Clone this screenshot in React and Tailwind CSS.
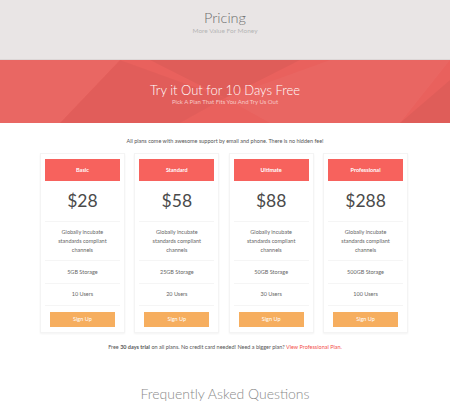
import React from 'react';

const plans = [
  { name: 'Basic', price: '$28', storage: '5GB Storage', users: '10 Users' },
  { name: 'Standard', price: '$58', storage: '25GB Storage', users: '20 Users' },
  { name: 'Ultimate', price: '$88', storage: '50GB Storage', users: '30 Users' },
  { name: 'Professional', price: '$288', storage: '500GB Storage', users: '100 Users' },
];

const BannerPattern = () => (
  <svg className="absolute inset-0 w-full h-full" viewBox="0 0 450 63" preserveAspectRatio="none">
    <polygon points="0,0 120,0 60,63 0,63" fill="#ffffff" opacity="0.04" />
    <polygon points="120,0 225,38 180,63 60,63" fill="#000000" opacity="0.03" />
    <polygon points="225,38 330,0 450,0 400,63 270,63" fill="#ffffff" opacity="0.035" />
    <polygon points="150,0 225,38 300,0" fill="#000000" opacity="0.04" />
    <polygon points="400,63 450,20 450,63" fill="#000000" opacity="0.04" />
  </svg>
);

const PlanCard = ({ plan }) => (
  <div className="flex flex-col bg-white border border-[#f4f4f4] shadow-[0_1px_2px_rgba(0,0,0,0.05)] px-[4px] pt-[5px] pb-[5px]">
    <div className="h-[22px] bg-[#f7625d] flex items-center justify-center text-white text-[5.5px] font-bold">
      {plan.name}
    </div>
    <div className="h-[41px] flex items-center justify-center text-[17.5px] text-[#4a4a4a] border-b border-[#f5f5f5]">
      {plan.price}
    </div>
    <div className="h-[39px] flex items-center justify-center text-center text-[5.5px] leading-[9px] text-[#666] border-b border-[#f5f5f5] px-2">
      Globally incubate<br />standards compliant<br />channels
    </div>
    <div className="h-[23px] flex items-center justify-center text-[5.5px] text-[#666] border-b border-[#f5f5f5]">
      {plan.storage}
    </div>
    <div className="h-[22px] flex items-center justify-center text-[5.5px] text-[#666] border-b border-[#f5f5f5]">
      {plan.users}
    </div>
    <div className="pt-[6px] px-[5px]">
      <div className="h-[15px] bg-[#f6ae5f] flex items-center justify-center text-white text-[5.5px]">
        Sign Up
      </div>
    </div>
  </div>
);

export default function App() {
  return (
    <div className="w-[450px] h-[420px] overflow-hidden bg-white font-['Lato',sans-serif]">
      <header className="h-[60px] bg-[#e9e5e5] border-b border-[#ddd7d7] flex flex-col items-center pt-[9px]">
        <h1 className="text-[14.5px] font-light text-[#6f6f6f] leading-[18px]">Pricing</h1>
        <p className="text-[6.5px] text-[#b5b5b5] leading-[8px]">More Value For Money</p>
      </header>

      <section className="relative h-[63px] bg-[#e9615d] flex flex-col items-center justify-center pt-[4px]">
        <BannerPattern />
        <h2 className="relative text-[13px] font-light text-white leading-[16px]">Try it Out for 10 Days Free</h2>
        <p className="relative text-[6px] text-[#f7c8c6] leading-[8px]">Pick A Plan That Fits You And Try Us Out</p>
      </section>

      <p className="text-center text-[5.5px] text-[#555] pt-[14px] leading-[8px]">
        All plans come with awesome support by email and phone. There is no hidden fee!
      </p>

      <div className="w-[368px] mx-[40px] mt-[8px] grid grid-cols-4 gap-[9.5px]">
        {plans.map((plan, index) => (
          <PlanCard key={index} plan={plan} />
        ))}
      </div>

      <p className="text-center text-[5.5px] text-[#555] pt-[10px] leading-[8px]">
        Free <span className="font-bold">30 days trial</span> on all plans. No credit card needed! Need a bigger plan?{' '}
        <span className="text-[#f3524d]">View Professional Plan.</span>
      </p>

      <h2 className="text-center text-[14px] font-light text-[#8a8a8a] pt-[33px] leading-[20px]">Frequently Asked Questions</h2>
    </div>
  );
}
